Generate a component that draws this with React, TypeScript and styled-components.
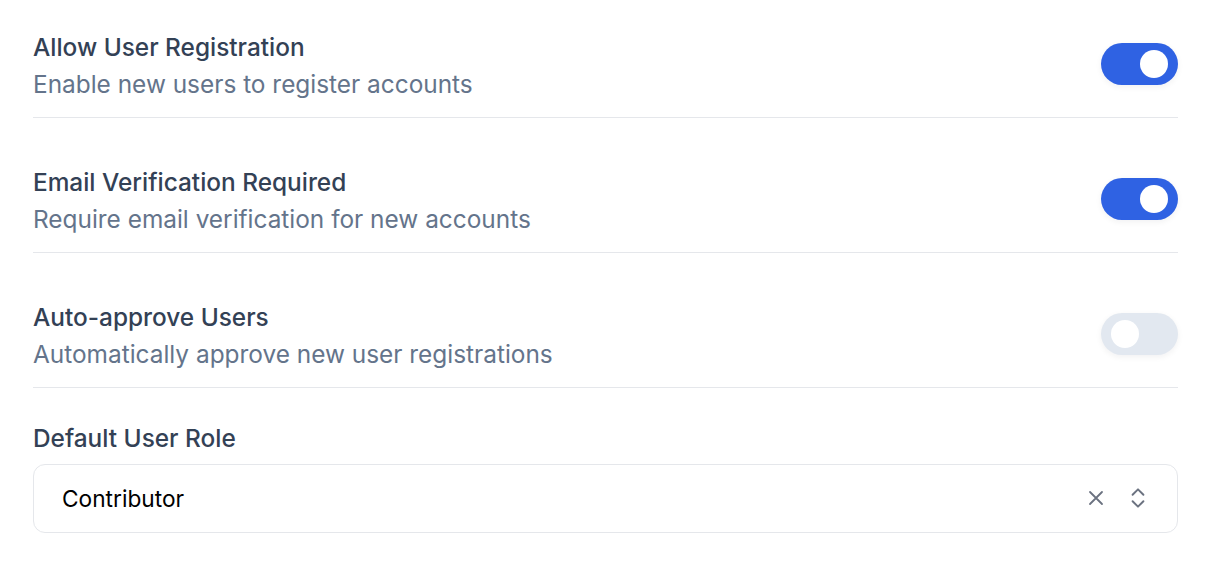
import React, { useState } from "react";
import styled, { createGlobalStyle } from "styled-components";

const GlobalStyle = createGlobalStyle`
  html, body {
    margin: 0;
    padding: 0;
    background: #ffffff;
    font-family: Inter, "Noto Sans", sans-serif;
  }
`;

const Page = styled.div`
  padding: 30.5px 36px 0 33px;
  display: flex;
  flex-direction: column;
`;

const SettingRow = styled.div`
  display: flex;
  align-items: center;
  justify-content: space-between;
  padding-bottom: 16.5px;
  margin-bottom: 47.5px;
  border-bottom: 1px solid #e5e7eb;
`;

const TextBlock = styled.div`
  display: flex;
  flex-direction: column;
  gap: 4px;
`;

const Title = styled.div`
  font-size: 24.4px;
  line-height: 33px;
  font-weight: 500;
  color: #334155;
`;

const Description = styled.div`
  font-size: 24.4px;
  line-height: 33px;
  color: #64748b;
`;

const Track = styled.button<{ $on: boolean }>`
  width: 77px;
  height: 42px;
  border-radius: 21px;
  border: none;
  padding: 0 10px;
  margin-top: -3px;
  display: flex;
  align-items: center;
  justify-content: ${(p) => (p.$on ? "flex-end" : "flex-start")};
  background: ${(p) => (p.$on ? "#2f62e3" : "#e2e8f0")};
  box-shadow: 0 2px 6px rgba(15, 23, 42, 0.06);
  cursor: pointer;
`;

const Knob = styled.span`
  width: 28px;
  height: 28px;
  border-radius: 50%;
  background: #ffffff;
`;

const Field = styled.div`
  display: flex;
  flex-direction: column;
  gap: 9px;
  margin-top: -14px;
`;

const Label = styled.div`
  font-size: 24.4px;
  line-height: 33px;
  font-weight: 500;
  color: #334155;
`;

const Select = styled.div`
  height: 67px;
  border: 1px solid #e5e7eb;
  border-radius: 12px;
  display: flex;
  align-items: center;
  padding: 0 26px 0 28px;
`;

const Value = styled.div`
  flex: 1;
  font-size: 22.7px;
  color: #000000;
`;

const Icons = styled.div`
  display: flex;
  align-items: center;
  gap: 17px;
  color: #6b7280;

  svg {
    display: block;
  }
`;

const Switch = ({ initial }: { initial: boolean }) => {
  const [on, setOn] = useState(initial);
  return (
    <Track $on={on} onClick={() => setOn(!on)}>
      <Knob />
    </Track>
  );
};

const settings = [
  { title: "Allow User Registration", desc: "Enable new users to register accounts", on: true },
  { title: "Email Verification Required", desc: "Require email verification for new accounts", on: true },
  { title: "Auto-approve Users", desc: "Automatically approve new user registrations", on: false },
];

export default function App() {
  return (
    <>
      <GlobalStyle />
      <Page>
        {settings.map((s) => (
          <SettingRow key={s.title}>
            <TextBlock>
              <Title>{s.title}</Title>
              <Description>{s.desc}</Description>
            </TextBlock>
            <Switch initial={s.on} />
          </SettingRow>
        ))}
        <Field>
          <Label>Default User Role</Label>
          <Select>
            <Value>Contributor</Value>
            <Icons>
              <svg width="24" height="24" viewBox="0 0 24 24" fill="none" stroke="currentColor" strokeWidth="1.8" strokeLinecap="round">
                <path d="M18 6 6 18M6 6l12 12" />
              </svg>
              <svg width="26" height="26" viewBox="0 0 24 24" fill="none" stroke="currentColor" strokeWidth="1.8" strokeLinecap="round" strokeLinejoin="round">
                <path d="m7 15 5 5 5-5M7 9l5-5 5 5" />
              </svg>
            </Icons>
          </Select>
        </Field>
      </Page>
    </>
  );
}
